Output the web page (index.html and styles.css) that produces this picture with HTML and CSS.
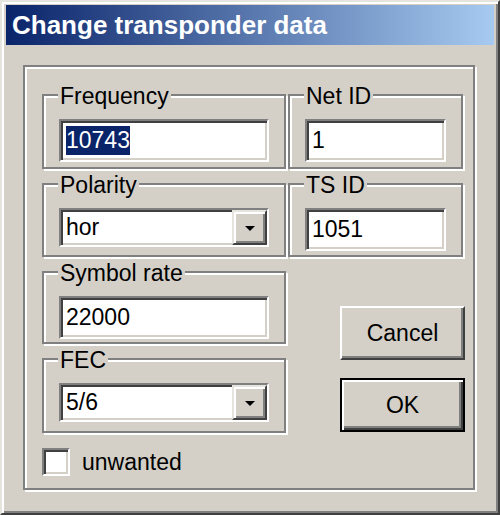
FILE: index.html
```
<!DOCTYPE html>
<html lang="en">

<head>
  <meta charset="utf-8">
  <title>Change transponder data</title>
  <link rel="stylesheet" href="styles.css">
</head>

<body>
  <div class="window">
    <div class="titlebar">Change transponder data</div>
    <div class="frame">
      <div class="grid">
        <div class="group">
          <div class="group-label">Frequency</div>
          <div class="field"><span class="sel">10743</span></div>
        </div>
        <div class="group">
          <div class="group-label">Net ID</div>
          <div class="field">1</div>
        </div>
        <div class="group">
          <div class="group-label">Polarity</div>
          <div class="field combo"><span>hor</span><span class="drop"><i class="arrow"></i></span></div>
        </div>
        <div class="group">
          <div class="group-label">TS ID</div>
          <div class="field">1051</div>
        </div>
        <div class="group symbol">
          <div class="group-label">Symbol rate</div>
          <div class="field">22000</div>
        </div>
        <div class="buttons">
          <button class="btn">Cancel</button>
          <button class="btn btn-default">OK</button>
        </div>
        <div class="group fec">
          <div class="group-label">FEC</div>
          <div class="field combo"><span>5/6</span><span class="drop"><i class="arrow"></i></span></div>
        </div>
      </div>
      <label class="check-row">
        <span class="checkbox"></span>
        <span>unwanted</span>
      </label>
    </div>
  </div>
</body>

</html>
```

FILE: styles.css
```
*,
*::before,
*::after {
  box-sizing: border-box;
}

body {
  margin: 0;
  background: #ffffff;
  font-family: "Liberation Sans", Arial, sans-serif;
  font-size: 23px;
  color: #000000;
}

.window {
  width: 500px;
  height: 515px;
  background: #d4d0c8;
  border: 2px solid;
  border-color: #e6e4de #404040 #404040 #e6e4de;
  box-shadow: inset 2px 2px 0 #ffffff, inset -2px -2px 0 #808080;
  padding: 3px 4px 0;
}

.titlebar {
  height: 40px;
  line-height: 40px;
  padding-left: 6px;
  background: linear-gradient(to right, #0a246a, #a6caf0);
  color: #ffffff;
  font-weight: bold;
  font-size: 26px;
}

.frame {
  width: 452px;
  height: 425px;
  margin: 20px 0 0 17px;
  border: 2px solid #808080;
  box-shadow: inset 2px 2px 0 #ffffff, 2px 2px 0 #ffffff;
  padding: 27px 0 0 17px;
}

.grid {
  display: grid;
  grid-template-columns: 244px 175px;
  grid-template-rows: 75px 74px 73px 75px;
  gap: 14px 2px;
}

.group {
  border: 2px solid #808080;
  box-shadow: inset 2px 2px 0 #ffffff, 2px 2px 0 #ffffff;
  padding: 0 15px 5px;
}

.group-label {
  width: max-content;
  margin: -11px 0 0 -1px;
  padding: 0 2px;
  line-height: 23px;
  background: #d4d0c8;
}

.field {
  display: flex;
  align-items: center;
  height: 43px;
  margin-top: 11px;
  padding-left: 5px;
  background: #ffffff;
  border: 2px solid;
  border-color: #808080 #ffffff #ffffff #808080;
  box-shadow: inset 2px 2px 0 #404040, inset -2px -2px 0 #d4d0c8;
}

.sel {
  background: #0a246a;
  color: #ffffff;
  line-height: 29px;
}

.combo {
  height: 39px;
  align-items: stretch;
}

.combo span:first-child {
  display: flex;
  align-items: center;
}

.drop {
  display: flex;
  align-items: center;
  justify-content: center;
  width: 35px;
  margin-left: auto;
  background: #d4d0c8;
  border: 2px solid;
  border-color: #e6e4de #404040 #404040 #e6e4de;
  box-shadow: inset 2px 2px 0 #ffffff, inset -2px -2px 0 #808080;
}

.arrow {
  width: 0;
  height: 0;
  border-left: 5px solid transparent;
  border-right: 5px solid transparent;
  border-top: 5px solid #000000;
  margin-top: 2px;
}

.symbol {
  grid-column: 1;
  grid-row: 3;
}

.fec {
  grid-column: 1;
  grid-row: 4;
}

.buttons {
  grid-column: 2;
  grid-row: 3 / span 2;
  display: flex;
  flex-direction: column;
  gap: 18px;
  padding: 35px 0 0 52px;
}

.btn {
  width: 125px;
  height: 54px;
  font: inherit;
  color: #000000;
  background: #d4d0c8;
  border: 2px solid;
  border-color: #ffffff #404040 #404040 #ffffff;
  box-shadow: inset -2px -2px 0 #808080;
  padding: 0;
}

.btn-default {
  border-color: #000000;
  box-shadow: inset 2px 2px 0 #ffffff, inset -2px -2px 0 #404040, inset -4px -4px 0 #808080;
}

.check-row {
  display: flex;
  align-items: center;
  gap: 12px;
  margin-top: 15px;
}

.checkbox {
  width: 28px;
  height: 28px;
  background: #ffffff;
  border: 2px solid;
  border-color: #808080 #ffffff #ffffff #808080;
  box-shadow: inset 2px 2px 0 #404040, inset -2px -2px 0 #d4d0c8;
}
```
